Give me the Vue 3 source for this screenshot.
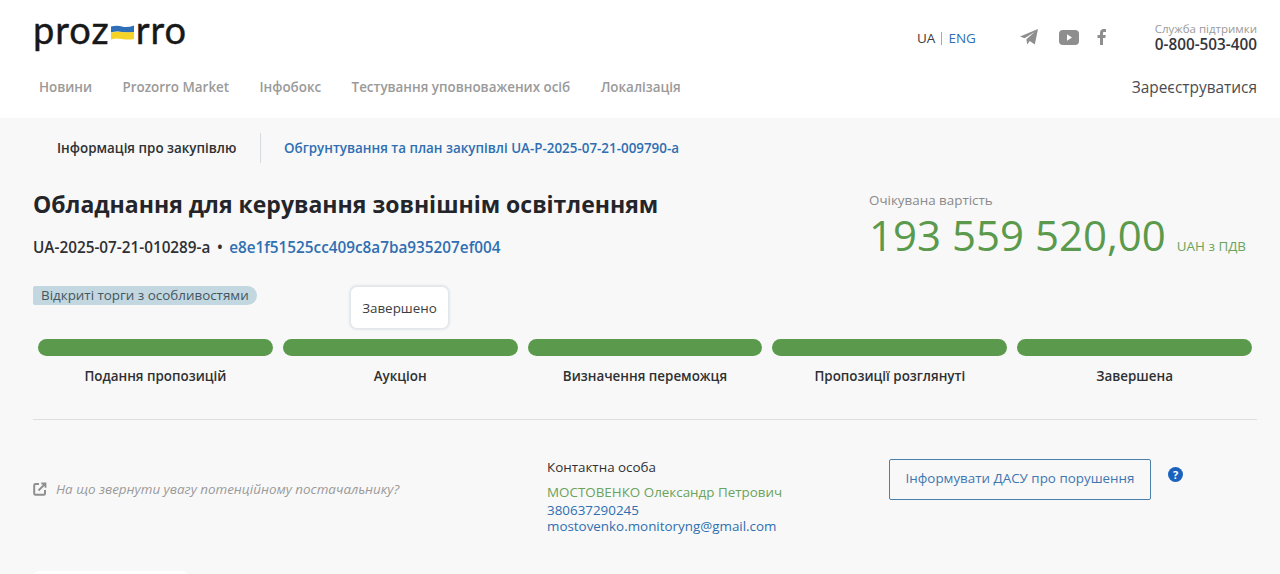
<script setup>
const nav = ['Новини', 'Prozorro Market', 'Інфобокс', 'Тестування уповноважених осіб', 'Локалізація']
const steps = ['Подання пропозицій', 'Аукціон', 'Визначення переможця', 'Пропозиції розглянуті', 'Завершена']
</script>

<template>
  <div class="page">
    <header class="header">
      <div class="top">
        <div class="logo">
          <span>proz</span>
          <svg class="flag" width="23" height="15" viewBox="0 0 23 15">
            <path d="M0 1.500 Q6 0 11 1.500 T23 0.500 V7 Q17 8 11 7 T0 7.500Z" fill="#2f6fb7" />
            <path d="M0 7.500 Q6 6.500 11 7 T23 7 V14 Q17 15 11 14 T0 14.500Z" fill="#f5d327" />
          </svg>
          <span>rro</span>
        </div>
        <div class="lang"><span>UA</span><i></i><a>ENG</a></div>
        <div class="social">
          <svg width="18" height="16" viewBox="0 0 18 16"><path d="M18 0 14.800 15.400 9.700 12 7.200 15.600 6.400 10.200 14.600 3 4.600 9.200 0 7.600Z" fill="#8e8e8e" /></svg>
          <svg width="20" height="15" viewBox="0 0 20 15"><rect width="20" height="15" rx="4" fill="#8e8e8e" /><path d="M8 4.200 13 7.500 8 10.800Z" fill="#fff" /></svg>
          <svg class="fb" width="9" height="16" viewBox="0 0 9 16"><path d="M3 16V9H.5V6H3V4C3 1.500 4.400 0 6.700 0H9V3H7.300C6.300 3 6 3.400 6 4.300V6H8.800L8.300 9H6V16Z" fill="#8e8e8e" /></svg>
        </div>
        <div class="support">
          <div class="support-label">Служба підтримки</div>
          <div class="phone">0-800-503-400</div>
        </div>
      </div>
      <nav class="nav">
        <a v-for="item in nav" :key="item">{{ item }}</a>
        <span class="register">Зареєструватися</span>
      </nav>
    </header>

    <main class="main">
      <div class="tabs">
        <span class="tab-active">Інформація про закупівлю</span>
        <a class="tab-link">Обгрунтування та план закупівлі UA-P-2025-07-21-009790-a</a>
      </div>

      <section class="summary">
        <div class="info">
          <h1>Обладнання для керування зовнішнім освітленням</h1>
          <div class="ids">
            <span>UA-2025-07-21-010289-a</span><b>•</b><a>e8e1f51525cc409c8a7ba935207ef004</a>
          </div>
        </div>
        <div class="value">
          <div class="value-label">Очікувана вартість</div>
          <div class="value-row">
            <span class="amount">193 559 520,00</span>
            <span class="currency">UAH з ПДВ</span>
          </div>
        </div>
      </section>

      <div class="badge-row">
        <span class="badge">Відкриті торги з особливостями</span>
        <span class="tooltip">Завершено</span>
      </div>

      <div class="steps">
        <div v-for="step in steps" :key="step" class="step">
          <div class="bar"></div>
          <div class="step-label">{{ step }}</div>
        </div>
      </div>

      <div class="contact-row">
        <div class="hint">
          <svg width="14" height="14" viewBox="0 0 14 14" fill="none">
            <path d="M6 2H2.500C1.700 2 1.200 2.500 1.200 3.200V11.500C1.200 12.200 1.700 12.800 2.500 12.800H10.800C11.500 12.800 12 12.200 12 11.500V8" stroke="#8f8f8f" stroke-width="2" />
            <path d="M5.500 8.500 12 2M8.300 1.500H12.500V5.700" stroke="#8f8f8f" stroke-width="1.800" />
          </svg>
          <em>На що звернути увагу потенційному постачальнику?</em>
        </div>
        <div class="contact">
          <div class="contact-title">Контактна особа</div>
          <div class="contact-name">МОСТОВЕНКО Олександр Петрович</div>
          <a>380637290245</a>
          <a>mostovenko.monitoryng@gmail.com</a>
        </div>
        <button class="report" type="button">Інформувати ДАСУ про порушення</button>
        <span class="help">?</span>
      </div>

      <div class="next-card"></div>
    </main>
  </div>
</template>

<style>
html, body { margin: 0; background: #f8f8f8; overflow: hidden; }
</style>

<style scoped>
.page { width: 1280px; height: 574px; overflow: hidden; font-family: "Open Sans", "Noto Sans", sans-serif; color: #2f3033; background: #f8f8f8; }
a { color: #2f6fb1; text-decoration: none; }

.header { height: 118px; box-sizing: border-box; background: #fff; padding: 0 23px 0 33px; }
.top { height: 72px; display: flex; align-items: flex-start; }
.logo { width: 860px; height: 50px; padding-top: 6px; box-sizing: border-box; display: flex; align-items: flex-start; font-family: Lato, sans-serif; font-size: 38px; line-height: 46px; font-weight: 400; -webkit-text-stroke: 0.4px #17181a; color: #17181a; letter-spacing: 1px; }
.flag { margin: 19px 2px 0 1px; }
.lang { margin: 29px 0 0 24px; width: 103px; display: flex; align-items: center; font-size: 13.500px; line-height: 18px; color: #3a3b3e; }
.lang i { width: 1px; height: 13px; background: #a9a9a9; margin: 0 6px; }
.social { width: 133px; margin-top: 29px; display: flex; align-items: center; gap: 21px; }
.fb { margin-left: -3px; }
.support { margin-left: auto; margin-top: 22px; text-align: right; white-space: nowrap; }
.support-label { font-size: 11.500px; line-height: 14px; color: #9a9a9a; }
.phone { font-size: 15.300px; line-height: 17px; font-weight: 600; color: #34353a; }

.nav { display: flex; align-items: center; gap: 30.400px; height: 30px; padding-left: 6px; }
.nav a { font-size: 13.400px; font-weight: 600; color: #9a9a9a; line-height: 30px; }
.register { margin-left: auto; font-size: 15.400px; color: #4b4c50; }

.main { padding: 15px 23px 0 33px; }
.tabs { height: 30px; display: flex; align-items: center; font-size: 13.400px; font-weight: 600; }
.tab-active { width: 203px; padding-left: 24px; color: #2f3033; line-height: 30px; border-right: 1px solid #d5dde0; margin-right: 23px; }
.tab-link { color: #2f6fb1; }

.summary { display: flex; margin-top: 24px; height: 100px; }
.info { width: 836px; }
h1 { margin: 0; padding-top: 1px; font-size: 23px; line-height: 32px; font-weight: 700; color: #24252a; }
.ids { margin-top: 16px; font-size: 15.300px; line-height: 22px; font-weight: 600; display: flex; }
.ids b { margin: 0 6.500px; font-weight: 600; }
.ids a { font-weight: 600; }
.value { padding-top: 3px; }
.value-label { font-size: 13.400px; line-height: 18px; padding-top: 1px; color: #8a8a8a; }
.value-row { display: flex; align-items: baseline; margin-top: 5px; }
.amount { font-size: 42px; line-height: 42px; color: #5b9a4d; }
.currency { margin-left: 11px; font-size: 13.400px; color: #6aa35c; }

.badge-row { position: relative; height: 56px; margin-top: -4px; }
.badge { display: inline-block; height: 19px; line-height: 19px; padding: 0 8px; font-size: 13.400px; color: #45565e; background: #c2d7e0; border-radius: 2px 10px 10px 2px; margin-top: 3px; }
.tooltip { position: absolute; left: 317px; top: 3px; width: 99px; height: 43px; box-sizing: border-box; display: flex; align-items: center; justify-content: center; font-size: 13.400px; color: #3c3d40; background: #fff; border: 1px solid #e3e8ec; border-radius: 7px; box-shadow: 0 0 3px #c9d2da; }

.steps { display: grid; grid-template-columns: repeat(5, 1fr); }
.step { padding: 0 5px; text-align: center; }
.bar { height: 17px; border-radius: 9px; background: #5b9a4d; }
.step-label { margin-top: 10px; font-size: 13.400px; line-height: 20px; font-weight: 600; color: #2f3033; }

.contact-row { display: flex; align-items: flex-start; margin-top: 33px; height: 152px; border-top: 1px solid #dedede; box-sizing: border-box; padding-top: 37px; }
.hint { width: 514px; display: flex; align-items: center; gap: 9px; margin-top: 22px; color: #9a9a9a; font-size: 13.400px; }
.hint em { line-height: 20px; }
.contact { width: 342px; font-size: 13.400px; line-height: 16px; }
.contact a { display: block; }
.contact-title { line-height: 20px; margin-bottom: 5px; color: #2f3033; }
.contact-name { line-height: 20px; color: #6aa35c; }
.report { width: 262px; height: 41px; margin-top: 2px; padding: 0 0 3px; background: transparent; border: 1px solid #4a80aa; border-radius: 2px; color: #3e77b0; font: 13.400px "Open Sans", sans-serif; }
.help { width: 15px; height: 15px; margin: 10px 0 0 17px; border-radius: 50%; background: #1a62bd; color: #fff; font-size: 11px; font-weight: 700; line-height: 15px; text-align: center; }

.next-card { width: 155px; height: 20px; background: #fff; border-radius: 6px 6px 0 0; }
</style>
